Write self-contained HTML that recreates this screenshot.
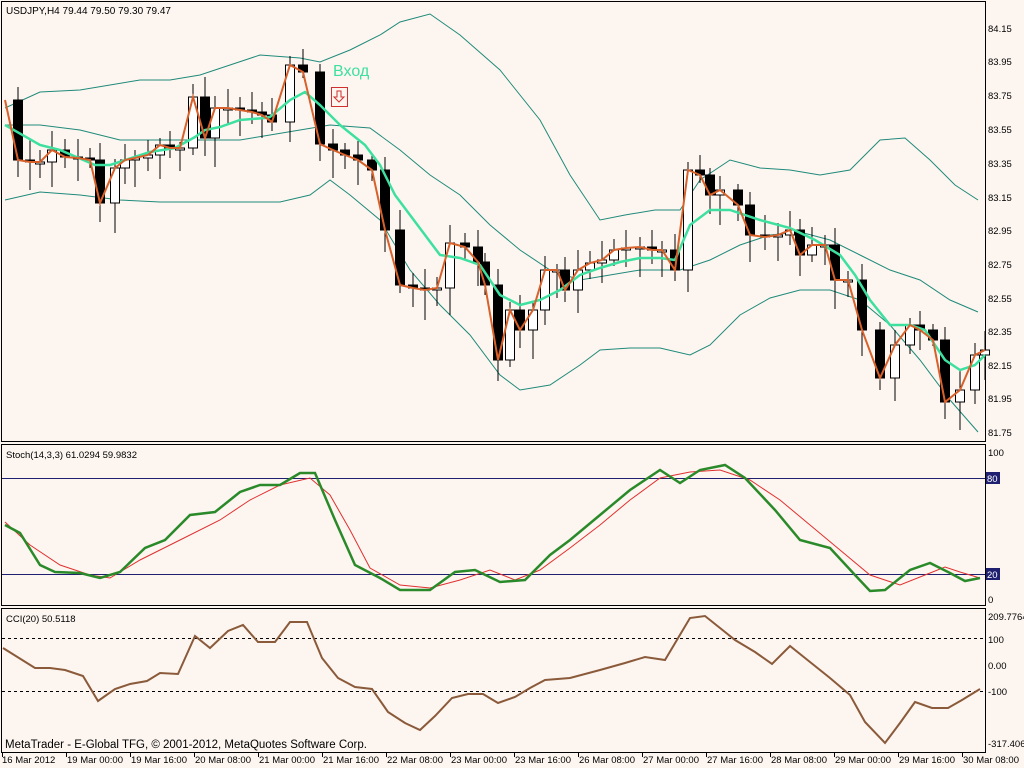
<!DOCTYPE html>
<html><head><meta charset="utf-8"><style>
html,body{margin:0;padding:0;background:#fdf6f0;}
svg{display:block;font-family:"Liberation Sans",Arial,sans-serif;}
</style></head><body>
<svg id="s" width="1024" height="768" viewBox="0 0 1024 768" xmlns="http://www.w3.org/2000/svg">
<rect width="1024" height="768" fill="#fdf6f0"/>
<g fill="none" stroke="#000" stroke-width="1">
<rect x="1.5" y="1.5" width="984" height="440"/>
<rect x="1.5" y="444.5" width="984" height="161"/>
<rect x="1.5" y="608.5" width="984" height="144"/>
</g>
<g fill="none" stroke="#1f8a7a" stroke-width="1">
<polyline points="5,108 40,92 80,90 110,85 140,80 170,80 200,75 230,65 260,55 300,58 320,62 350,50 380,35 400,22 430,14 460,35 500,70 540,120 570,175 600,220 625,215 655,210 680,210 700,180 730,160 760,168 790,170 820,175 850,170 880,140 905,138 930,160 955,185 978,200"/>
<polyline points="5,125 40,125 80,130 120,140 160,140 200,140 240,140 270,135 300,130 330,125 370,128 400,150 430,175 460,195 490,225 520,250 550,270 580,280 610,275 640,270 680,270 710,260 740,245 770,235 800,232 830,240 860,255 890,270 920,280 950,300 978,312"/>
<polyline points="5,200 40,192 80,195 120,200 160,202 200,202 240,202 280,202 310,195 330,180 350,195 380,220 410,270 440,305 470,335 500,375 520,390 550,385 580,365 600,350 630,348 660,348 690,355 710,345 740,315 770,298 800,290 830,290 860,300 890,325 920,360 950,400 978,432"/>
</g>
<g id="candles"></g>
<polyline fill="none" stroke="#3ee0a0" stroke-width="2.5" points="5,125 40,145 60,150 95,165 110,165 150,152 175,148 195,137 205,130 220,127 240,120 265,118 270,117 290,100 305,92 320,105 340,125 365,145 380,165 395,195 410,215 425,235 440,255 460,258 480,265 500,295 520,305 540,300 560,290 580,275 600,268 620,262 640,258 660,258 675,260 690,225 710,210 730,210 760,220 790,228 815,240 840,255 855,275 870,300 890,325 910,325 925,330 945,360 960,370 975,365 985,355"/>
<polyline id="close" fill="none" stroke="#d8602a" stroke-width="2" points="5,100 18,160 30,162 40,162 52,150 65,157 78,158 90,160 100,203 115,168 125,160 135,158 148,155 160,145 170,148 180,148 193,97 205,138 215,108 228,108 240,110 252,112 262,115 272,122 290,65 303,72 320,144 333,150 345,155 358,160 372,170 385,230 400,285 413,288 425,290 437,288 450,243 465,247 478,262 485,285 498,360 510,310 520,330 533,310 545,270 557,270 565,290 578,270 590,263 602,260 614,250 626,248 640,247 652,250 662,250 675,270 688,170 700,175 710,195 720,190 738,205 750,235 765,237 778,235 790,230 800,255 812,245 825,245 835,280 848,280 862,330 880,378 895,345 910,325 920,330 933,340 945,402 960,390 975,355 985,350"/>
<text x="333" y="76" font-size="16" fill="#3ee0a0">Вход</text>
<rect x="331.5" y="87.5" width="16" height="19" fill="none" stroke="#d03030"/>
<path d="M337 91h4v6h3l-5 5-5-5h3z" fill="none" stroke="#d03030"/>
<text x="6" y="14" font-size="10" fill="#000">USDJPY,H4  79.44 79.50 79.30 79.47</text>
<g font-size="9.5" fill="#000">
<text x="988" y="32">84.15</text><text x="988" y="65">83.95</text><text x="988" y="99">83.75</text><text x="988" y="133">83.55</text><text x="988" y="167">83.35</text><text x="988" y="201">83.15</text><text x="988" y="234">82.95</text><text x="988" y="268">82.75</text><text x="988" y="302">82.55</text><text x="988" y="335">82.35</text><text x="988" y="369">82.15</text><text x="988" y="402">81.95</text><text x="988" y="436">81.75</text>
</g>
<line x1="2" y1="478.5" x2="985" y2="478.5" stroke="#202070"/>
<line x1="2" y1="574.5" x2="985" y2="574.5" stroke="#202070"/>
<polyline fill="none" stroke="#e03030" stroke-width="1" points="5,522 30,545 60,565 90,575 110,578 140,560 180,540 220,520 250,500 280,485 310,478 330,495 350,530 370,568 400,585 430,588 460,580 490,570 515,580 540,570 570,548 600,525 630,500 660,478 690,472 720,470 750,480 780,500 810,525 840,550 870,575 900,585 925,575 945,567 960,572 980,578"/>
<polyline fill="none" stroke="#2a8a2a" stroke-width="2.5" points="5,525 20,533 40,565 55,572 80,573 100,578 120,572 145,548 165,540 190,515 215,512 240,492 260,485 280,485 300,473 315,473 335,520 355,565 380,578 400,590 430,590 455,572 475,570 500,582 525,580 550,555 570,540 600,515 630,490 660,470 680,483 700,470 725,465 745,478 775,510 800,540 830,548 855,575 870,591 885,590 910,570 930,563 950,573 965,581 980,578"/>
<text x="6" y="458" font-size="9.5" fill="#000">Stoch(14,3,3) 61.0294 59.9832</text>
<g font-size="9.5">
<text x="988" y="456" fill="#000">100</text>
<rect x="986" y="472" width="14" height="12" fill="#202070"/><text x="987" y="482" fill="#fff">80</text>
<rect x="986" y="568" width="14" height="12" fill="#202070"/><text x="987" y="578" fill="#fff">20</text>
<text x="988" y="603" fill="#000">0</text>
</g>
<line x1="2" y1="638.5" x2="985" y2="638.5" stroke="#000" stroke-dasharray="3,3"/>
<line x1="2" y1="691.5" x2="985" y2="691.5" stroke="#000" stroke-dasharray="3,3"/>
<polyline fill="none" stroke="#8a5a3a" stroke-width="2" points="3,648 35,668 50,668 65,670 83,676 98,701 115,689 130,684 147,681 160,673 178,674 195,636 210,648 228,631 243,625 258,642 275,642 290,622 307,622 322,658 338,678 355,687 372,689 388,712 405,723 420,730 435,716 452,698 468,694 483,694 498,703 515,697 530,688 545,680 570,678 600,670 625,663 645,657 665,660 690,618 705,616 720,628 735,640 755,652 772,664 790,646 810,662 830,678 850,695 865,722 885,743 900,723 915,702 932,708 948,708 962,700 980,689"/>
<text x="6" y="622" font-size="9.5" fill="#000">CCI(20) 50.5118</text>
<text x="5" y="748" font-size="11.5" fill="#000">MetaTrader - E-Global TFG, © 2001-2012, MetaQuotes Software Corp.</text>
<g font-size="9.5" fill="#000">
<text x="988" y="620">209.7764</text><text x="988" y="643">100</text><text x="988" y="669">0.00</text><text x="988" y="695">-100</text><text x="988" y="747">-317.406</text>
</g>
<g font-size="9.5" fill="#000">
<text x="2" y="763">16 Mar 2012</text><text x="67" y="763">19 Mar 00:00</text><text x="131" y="763">19 Mar 16:00</text><text x="195" y="763">20 Mar 08:00</text><text x="259" y="763">21 Mar 00:00</text><text x="323" y="763">21 Mar 16:00</text><text x="387" y="763">22 Mar 08:00</text><text x="451" y="763">23 Mar 00:00</text><text x="515" y="763">23 Mar 16:00</text><text x="579" y="763">26 Mar 08:00</text><text x="643" y="763">27 Mar 00:00</text><text x="707" y="763">27 Mar 16:00</text><text x="771" y="763">28 Mar 08:00</text><text x="835" y="763">29 Mar 00:00</text><text x="899" y="763">29 Mar 16:00</text><text x="963" y="763">30 Mar 08:00</text>
</g>
<g stroke="#000">
<line x1="2.5" y1="753" x2="2.5" y2="757"/><line x1="66.5" y1="753" x2="66.5" y2="757"/><line x1="130.5" y1="753" x2="130.5" y2="757"/><line x1="194.5" y1="753" x2="194.5" y2="757"/><line x1="258.5" y1="753" x2="258.5" y2="757"/><line x1="322.5" y1="753" x2="322.5" y2="757"/><line x1="386.5" y1="753" x2="386.5" y2="757"/><line x1="450.5" y1="753" x2="450.5" y2="757"/><line x1="514.5" y1="753" x2="514.5" y2="757"/><line x1="578.5" y1="753" x2="578.5" y2="757"/><line x1="642.5" y1="753" x2="642.5" y2="757"/><line x1="706.5" y1="753" x2="706.5" y2="757"/><line x1="770.5" y1="753" x2="770.5" y2="757"/><line x1="834.5" y1="753" x2="834.5" y2="757"/><line x1="898.5" y1="753" x2="898.5" y2="757"/><line x1="962.5" y1="753" x2="962.5" y2="757"/>
</g>
</svg>
<script>
(function(){
var pts=document.getElementById('close').getAttribute('points').trim().split(/\s+/).map(function(p){return p.split(',').map(Number);});
var g=document.getElementById('candles'),h='';
for(var i=1;i<pts.length;i++){
 var x=pts[i][0],o=pts[i-1][1],c=pts[i][1];
 var top=Math.min(o,c),bot=Math.max(o,c);if(bot-top<2)bot=top+2;
 var wt=top-6-((i*7)%15),wb=bot+6+((i*11)%25);
 h+='<line x1="'+x+'" y1="'+wt+'" x2="'+x+'" y2="'+wb+'" stroke="#000"/>';
 var down=c>o;
 h+='<rect x="'+(x-4.5)+'" y="'+top+'" width="9" height="'+(bot-top)+'" fill="'+(down?'#000':'#fff')+'" stroke="#000"/>';
}
g.innerHTML=h;
})();
</script>
</body></html>
